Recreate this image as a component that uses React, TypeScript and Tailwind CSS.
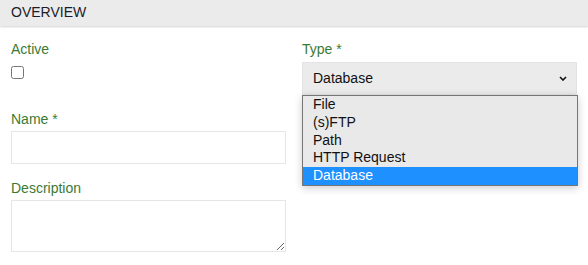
import React from "react";

const labelCls = "block pt-[1px] text-[14px] leading-[20px] text-[#3b7a35]";

export default function App() {
  const options = ["File", "(s)FTP", "Path", "HTTP Request", "Database"];
  return (
    <div className="relative w-[588px] h-[265px] bg-white overflow-hidden" style={{ fontFamily: '"Liberation Sans", Arial, sans-serif' }}>
      <div className="h-[26px] bg-[#ebebeb] px-[11px] text-[14px] leading-[25px] text-[#1c1c28] shadow-[0_1px_2px_rgba(0,0,0,0.18)]">
        OVERVIEW
      </div>
      <div className="grid grid-cols-[275px_276px] gap-x-[16px] px-[11px] pt-[12px]">
        <div className="flex flex-col">
          <label className={labelCls}>Active</label>
          <input type="checkbox" className="m-0 mt-[7px] w-[13px] h-[13px]" />
          <label className={labelCls + " mt-[29px] mb-[2px]"}>Name *</label>
          <input type="text" className="h-[33px] w-[275px] border border-[#e6e6e6] bg-white outline-none" />
          <label className={labelCls + " mt-[13px] mb-[2px]"}>Description</label>
          <textarea className="h-[52px] w-[275px] border border-[#e6e6e6] bg-white outline-none" />
        </div>
        <div className="relative flex flex-col">
          <label className={labelCls}>Type *</label>
          <div className="mt-[3px] h-[33px] w-[275px] border border-[#e3e3e3] bg-[#ebebeb] flex items-center justify-between pl-[10px] pr-[8px] text-[14px] text-[#111]">
            <span>Database</span>
            <svg width="8" height="5" viewBox="0 0 8 5" className="mr-[1px]">
              <path d="M1 1 L4 4 L7 1" fill="none" stroke="#111" strokeWidth="1.6" />
            </svg>
          </div>
          <div className="absolute left-0 top-[57px] w-[276px] border border-[#767676] bg-[#e9e9e9] shadow-[0_2px_8px_rgba(0,0,0,0.2)] text-[14px] text-[#111]">
            {options.map((o) => (
              <div
                key={o}
                className={
                  "h-[17.8px] leading-[17.8px] pl-[10px] " +
                  (o === "Database" ? "bg-[#1e90ff] text-white" : "")
                }
              >
                {o}
              </div>
            ))}
          </div>
        </div>
      </div>
    </div>
  );
}
